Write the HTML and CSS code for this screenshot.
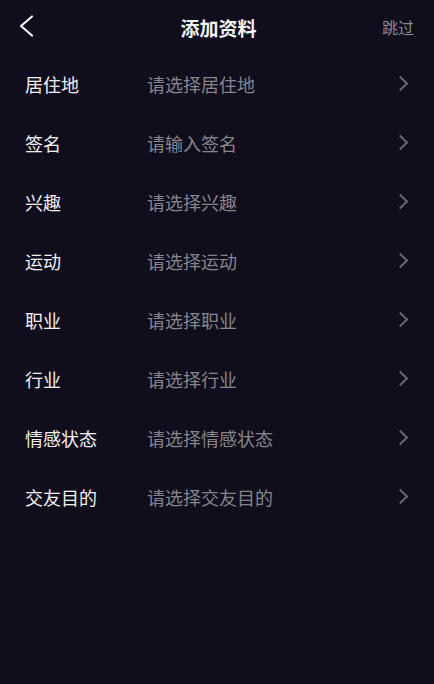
FILE: index.html
```html
<!DOCTYPE html>
<html lang="zh-CN">
<head>
    <meta charset="UTF-8">
    <meta name="viewport" content="width=device-width, initial-scale=1.0">
    <title>添加资料</title>
    <link rel="stylesheet" href="styles.css">
</head>
<body>
    <div class="page">
        <div class="header">
            <div class="back">
                <svg width="15" height="22" viewBox="0 0 15 22"><path d="M13 1.5 L2 11 L13 20.5" fill="none" stroke="#f2f2f4" stroke-width="2.2" stroke-linecap="round" stroke-linejoin="round"/></svg>
            </div>
            <div class="title">添加资料</div>
            <div class="skip">跳过</div>
        </div>

        <div class="list">
            <div class="row"><span class="label">居住地</span><span class="value">请选择居住地</span><span class="arrow"></span></div>
            <div class="row"><span class="label">签名</span><span class="value">请输入签名</span><span class="arrow"></span></div>
            <div class="row"><span class="label">兴趣</span><span class="value">请选择兴趣</span><span class="arrow"></span></div>
            <div class="row"><span class="label">运动</span><span class="value">请选择运动</span><span class="arrow"></span></div>
            <div class="row"><span class="label">职业</span><span class="value">请选择职业</span><span class="arrow"></span></div>
            <div class="row"><span class="label">行业</span><span class="value">请选择行业</span><span class="arrow"></span></div>
            <div class="row"><span class="label">情感状态</span><span class="value">请选择情感状态</span><span class="arrow"></span></div>
            <div class="row"><span class="label">交友目的</span><span class="value">请选择交友目的</span><span class="arrow"></span></div>
        </div>
    </div>
</body>
</html>
```

FILE: styles.css
```css
html, body {
    margin: 0;
    padding: 0;
    background: #100e1c;
}

body {
    font-family: "Noto Sans CJK SC", "Noto Sans", sans-serif;
    color: #ececef;
}

.page {
    width: 434px;
    height: 684px;
    background: #100e1c;
}

.header {
    height: 54px;
    display: flex;
    align-items: center;
    padding: 0 20px 0 19px;
}

.back {
    width: 60px;
    display: flex;
    align-items: center;
    height: 22px;
    margin-top: -2px;
}

.back svg {
    display: block;
}

.title {
    flex: 1;
    text-align: center;
    font-size: 19px;
    font-weight: bold;
    color: #f4f4f6;
    padding-left: 4px;
}

.skip {
    width: 60px;
    text-align: right;
    font-size: 16px;
    color: #8b8a92;
}

.row {
    height: 59px;
    display: flex;
    align-items: center;
    padding: 0 28px 0 25px;
}

.label {
    width: 122px;
    font-size: 18px;
    color: #f0f0f2;
}

.value {
    flex: 1;
    font-size: 18px;
    color: #85848c;
}

.arrow {
    width: 9px;
    height: 9px;
    border-top: 2px solid #67666f;
    border-right: 2px solid #67666f;
    transform: rotate(45deg);
}
```
